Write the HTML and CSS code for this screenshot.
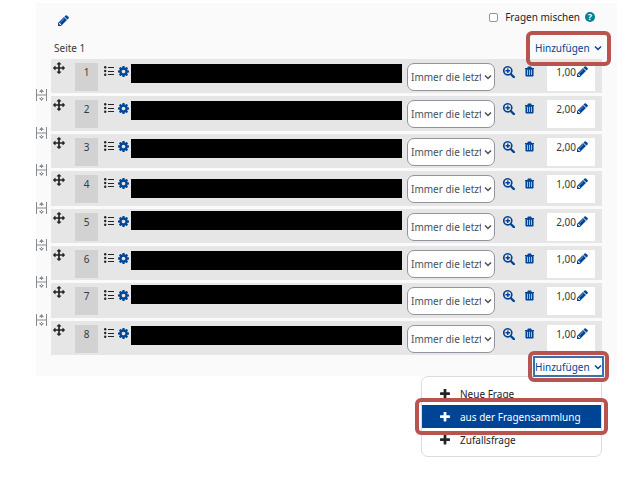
FILE: index.html
```html
<!DOCTYPE html>
<html lang="de">
<head>
    <meta charset="UTF-8">
    <meta name="viewport" content="width=device-width, initial-scale=1.0">
    <title>Fragen</title>
    <link rel="stylesheet" href="styles.css">
</head>
<body>
    <svg class="sprite" aria-hidden="true">
        <symbol id="pencil" viewBox="128 128 1536 1536"><path d="M491 1536l91-91-235-235-91 91v107h128v128h107zm523-928q0-22-22-22-10 0-17 7l-542 542q-7 7-7 17 0 22 22 22 10 0 17-7l542-542q7-7 7-17zm-54-192l416 416-832 832h-416v-416zm683 96q0 53-37 90l-166 166-416-416 166-165q36-38 90-38 53 0 91 38l235 234q37 39 37 91z"/></symbol>
        <symbol id="plus" viewBox="192 192 1408 1408"><path d="M1600 736v192q0 40-28 68t-68 28h-416v416q0 40-28 68t-68 28h-192q-40 0-68-28t-28-68v-416h-416q-40 0-68-28t-28-68v-192q0-40 28-68t68-28h416v-416q0-40 28-68t68-28h192q40 0 68 28t28 68v416h416q40 0 68 28t28 68z"/></symbol>
        <symbol id="move" viewBox="0 0 1792 1792"><path d="M1792 896q0 26-19 45l-256 256q-19 19-45 19t-45-19-19-45v-128h-384v384h128q26 0 45 19t19 45-19 45l-256 256q-19 19-45 19t-45-19l-256-256q-19-19-19-45t19-45 45-19h128v-384h-384v128q0 26-19 45t-45 19-45-19l-256-256q-19-19-19-45t19-45l256-256q19-19 45-19t45 19 19 45v128h384v-384h-128q-26 0-45-19t-19-45 19-45l256-256q19-19 45-19t45 19l256 256q19 19 19 45t-19 45-45 19h-128v384h384v-128q0-26 19-45t45-19 45 19l256 256q19 19 19 45z"/></symbol>
        <symbol id="gear" viewBox="128 128 1536 1536"><path d="M1152 896q0-106-75-181t-181-75-181 75-75 181 75 181 181 75 181-75 75-181zm512-109v222q0 12-8 23t-20 13l-185 28q-19 54-39 91 35 50 107 138 10 12 10 25t-9 23q-27 37-99 108t-94 71q-12 0-26-9l-138-108q-44 23-91 38-16 136-29 186-7 28-36 28h-222q-14 0-24.5-8.5t-11.5-21.5l-28-184q-49-16-90-37l-141 107q-10 9-25 9-14 0-25-11-126-114-165-168-7-10-7-23 0-12 8-23 15-21 51-66.5t54-70.5q-27-50-41-99l-183-27q-13-2-21-12.5t-8-23.5v-222q0-12 8-23t19-13l186-28q14-46 39-92-40-57-107-138-10-12-10-24 0-10 9-23 26-36 98.5-107.5t94.5-71.5q13 0 26 10l138 107q44-23 91-38 16-136 29-186 7-28 36-28h222q14 0 24.5 8.5t11.5 21.5l28 184q49 16 90 37l142-107q9-9 24-9 13 0 25 10 129 119 165 170 7 8 7 22 0 12-8 23-15 21-51 66.5t-54 70.5q26 50 41 98l183 28q13 2 21 12.5t8 23.5z"/></symbol>
        <symbol id="list" viewBox="0 0 10 10"><circle cx="1.2" cy="1.2" r="1.2"/><circle cx="1.2" cy="5" r="1.2"/><circle cx="1.2" cy="8.8" r="1.2"/><path d="M4 1h6v1H4zM4 5h6v1H4zM4 8h6v1H4z"/></symbol>
        <symbol id="search" viewBox="0 0 12 12"><path d="M4.8 0a4.8 4.8 0 0 1 4 7.400l2.900 2.900a1 1 0 0 1-1.600 1.600L7.200 8.900A4.800 4.800 0 1 1 4.800 0zm0 1.600a3.200 3.200 0 1 0 0 6.400 3.200 3.200 0 0 0 0-6.400zM4.100 2.500h1.400v1.600h1.600v1.400H5.500v1.600H4.100V5.500H2.500V4.100h1.600z"/></symbol>
        <symbol id="trash" viewBox="0 0 10 11"><path d="M3.200 0h3.600l.7 1.500H10v1.200H9.500V10a1 1 0 0 1-1 1h-7a1 1 0 0 1-1-1V2.700H0V1.500h2.500z"/><path class="trash-lines" d="M2.300 3.500h1v6h-1zM4.500 3.500h1v6h-1zM6.700 3.500h1v6h-1z"/></symbol>
        <symbol id="chevron" viewBox="0 0 8 8"><path class="line" d="M1 2.500l3 3 3-3"/></symbol>
        <symbol id="split" viewBox="0 0 11 12"><path d="M0 0h1v12H0zM10 0h1v12h-1zM1 5.500h9v1H1zM5 2h1v2H5zM5 8h1v2H5zM5.500 0L8 3H3zM5.500 12L8 9H3z"/></symbol>
    </svg>

    <main class="quiz">
        <div class="toolbar">
            <button class="icon-button" aria-label="Bearbeiten"><svg class="icon"><use href="#pencil"/></svg></button>
            <div class="shuffle">
                <input type="checkbox" id="shuffle">
                <label for="shuffle">Fragen mischen</label>
                <button class="help" aria-label="Hilfe">?</button>
            </div>
        </div>
        <div class="page-header">
            <span>Seite 1</span>
            <button class="add marked">Hinzufügen <svg class="chevron"><use href="#chevron"/></svg></button>
        </div>

        <ul class="slots-list" id="slots"></ul>

        <div class="page-footer">
            <button class="add focused marked" aria-expanded="true">Hinzufügen <svg class="chevron"><use href="#chevron"/></svg></button>
            <div class="menu">
                <a href="#neu"><svg class="plus"><use href="#plus"/></svg>Neue Frage</a>
                <a href="#sammlung" class="active marked"><svg class="plus"><use href="#plus"/></svg>aus der Fragensammlung</a>
                <a href="#zufall"><svg class="plus"><use href="#plus"/></svg>Zufallsfrage</a>
            </div>
        </div>
    </main>
    <script src="slots.js"></script>
</body>
</html>
```

FILE: styles.css
```css
* {
    box-sizing: border-box;
}
body {
    min-height: 100vh;
    margin: 0;
    padding: 3px 18px 0 36px;
    background: white;
    color: #343a40;
    font-family: "Noto Sans", sans-serif;
    font-size: 10px;
    line-height: 16px;
}
.sprite {
    position: absolute;
    width: 0;
    height: 0;
}
svg {
    display: block;
    flex: none;
    fill: currentColor;
}
button {
    font: inherit;
    color: #004595;
    background: none;
    border: none;
    padding: 0;
    cursor: pointer;
}
.quiz {
    background: #fafafa;
}
.icon {
    width: 11px;
    height: 11px;
}

/* Header */
.toolbar {
    display: flex;
    justify-content: space-between;
    align-items: center;
    height: 30px;
    padding: 4px 22px 0;
}
.shuffle {
    display: flex;
    align-items: center;
    gap: 5px;
    margin-top: -6px;
    color: #212529;
}
.shuffle input {
    appearance: none;
    width: 9px;
    height: 9px;
    margin: 0 2px 0 0;
    border: 1px solid #8f959e;
    border-radius: 2px;
    background: white;
}
.help {
    width: 10px;
    height: 10px;
    border-radius: 50%;
    background: #008196;
    color: white;
    font-size: 9px;
    font-weight: bold;
    line-height: 10px;
}
.page-header {
    display: flex;
    justify-content: space-between;
    align-items: center;
    height: 26px;
    padding: 4px 13px 0 18px;
}
.add {
    display: flex;
    align-items: center;
    justify-content: space-between;
    width: 71px;
    height: 21px;
    padding: 0 2px;
    position: relative;
}
.chevron {
    width: 8px;
    height: 8px;
}
.line {
    fill: none;
    stroke: currentColor;
    stroke-width: 1.5;
}

/* Red frames */
.marked::after {
    content: "";
    position: absolute;
    z-index: 2;
    inset: -7px;
    border: 4px solid #b85450;
    border-radius: 6px;
    pointer-events: none;
}

/* Question rows */
.slots-list {
    display: grid;
    grid-auto-rows: 1fr;
    gap: 3px;
    height: 296px;
    margin: 0;
    padding: 0 15px 0 0;
    list-style: none;
}
.slot {
    display: grid;
    grid-template-columns: 15px 1fr;
}
.split {
    align-self: end;
    margin-bottom: -8px;
    color: #868b90;
}
.split svg {
    width: 11px;
    height: 12px;
}
.slot-body {
    grid-column: 2;
    display: flex;
    background: #e6e6e6;
    padding: 0 7px 0 2px;
}
.move {
    width: 12px;
    height: 12px;
    margin: 3px 10px 0 0;
    color: #212529;
}
.number {
    width: 23px;
    height: 28px;
    margin: 4px 6px 0 0;
    padding-top: 1px;
    background: #d2d2d2;
    text-align: center;
}
.list {
    width: 10px;
    height: 10px;
    margin: 7px 4px 0 0;
    color: #212529;
}
.settings {
    align-self: flex-start;
    margin: 7px 2px 0 0;
}
.name {
    flex: 1;
    display: flex;
    align-items: center;
    height: 25px;
    margin: 2px 5px 0 0;
}
.name.high {
    align-items: flex-start;
}
.name.low {
    align-items: flex-end;
}
.name span {
    width: 100%;
    height: 19px;
    background: black;
}
.version {
    position: relative;
    margin: 4px 8px 0 0;
}
.version select {
    appearance: none;
    display: block;
    width: 88px;
    height: 28px;
    padding: 0 13px 0 3px;
    border: 1px solid #8f959e;
    border-radius: 7px;
    background: white;
    color: #495057;
    font: inherit;
}
.version .chevron {
    position: absolute;
    top: 10px;
    right: 3px;
    color: #495057;
    pointer-events: none;
}
.preview,
.delete {
    align-self: flex-start;
    margin-top: 7px;
}
.preview svg {
    width: 12px;
    height: 12px;
}
.delete {
    margin-left: 10px;
}
.delete svg {
    width: 9px;
    height: 11px;
}
.trash-lines {
    fill: #a9d2cf;
}
.mark {
    display: flex;
    justify-content: flex-end;
    align-items: flex-start;
    gap: 1px;
    width: 48px;
    height: 28px;
    margin: 4px 0 0 13px;
    padding: 1px 7px 0 0;
    background: white;
}
.mark button {
    padding-top: 2px;
}

/* Footer with open menu */
.page-footer {
    position: relative;
    display: flex;
    justify-content: flex-end;
    height: 21px;
    padding-right: 13px;
}
.page-footer .add {
    margin-top: 1px;
}
.focused {
    border: 2px solid #3a70b0;
    background: white;
    padding: 0;
    z-index: 2;
}
.menu {
    position: absolute;
    top: 100%;
    right: 15px;
    width: 181px;
    padding: 5px 0;
    background: white;
    border: 1px solid #dcdcdc;
    border-radius: 7px;
}
.menu a {
    position: relative;
    display: flex;
    align-items: center;
    gap: 10px;
    height: 23px;
    padding-left: 18px;
    color: #212529;
    text-decoration: none;
}
.menu .plus {
    width: 10px;
    height: 10px;
}
.menu .active {
    background: #004595;
    color: white;
}
```

FILE: slots.js
```js
const slots = [
  { mark: "1,00", bar: "" },
  { mark: "2,00", bar: "" },
  { mark: "2,00", bar: "" },
  { mark: "1,00", bar: "low" },
  { mark: "2,00", bar: "high" },
  { mark: "1,00", bar: "" },
  { mark: "1,00", bar: "high" },
  { mark: "1,00", bar: "" }
];

const icon = (name, cls = "icon") => `<svg class="${cls}"><use href="#${name}"/></svg>`;

document.getElementById("slots").innerHTML = slots.map((slot, i) => `
  <li class="slot">
    ${i < slots.length - 1 ? `<button class="split" aria-label="Seitenumbruch">${icon("split")}</button>` : ""}
    <div class="slot-body">
      ${icon("move", "move")}
      <span class="number">${i + 1}</span>
      ${icon("list", "list")}
      <button class="settings" aria-label="Frage bearbeiten">${icon("gear")}</button>
      <div class="name ${slot.bar}"><span></span></div>
      <div class="version">
        <select aria-label="Version"><option>Immer die letzte</option></select>
        ${icon("chevron", "chevron")}
      </div>
      <button class="preview" aria-label="Vorschau">${icon("search")}</button>
      <button class="delete" aria-label="Löschen">${icon("trash")}</button>
      <div class="mark">${slot.mark}<button aria-label="Punkte bearbeiten">${icon("pencil")}</button></div>
    </div>
  </li>`).join("");
```
